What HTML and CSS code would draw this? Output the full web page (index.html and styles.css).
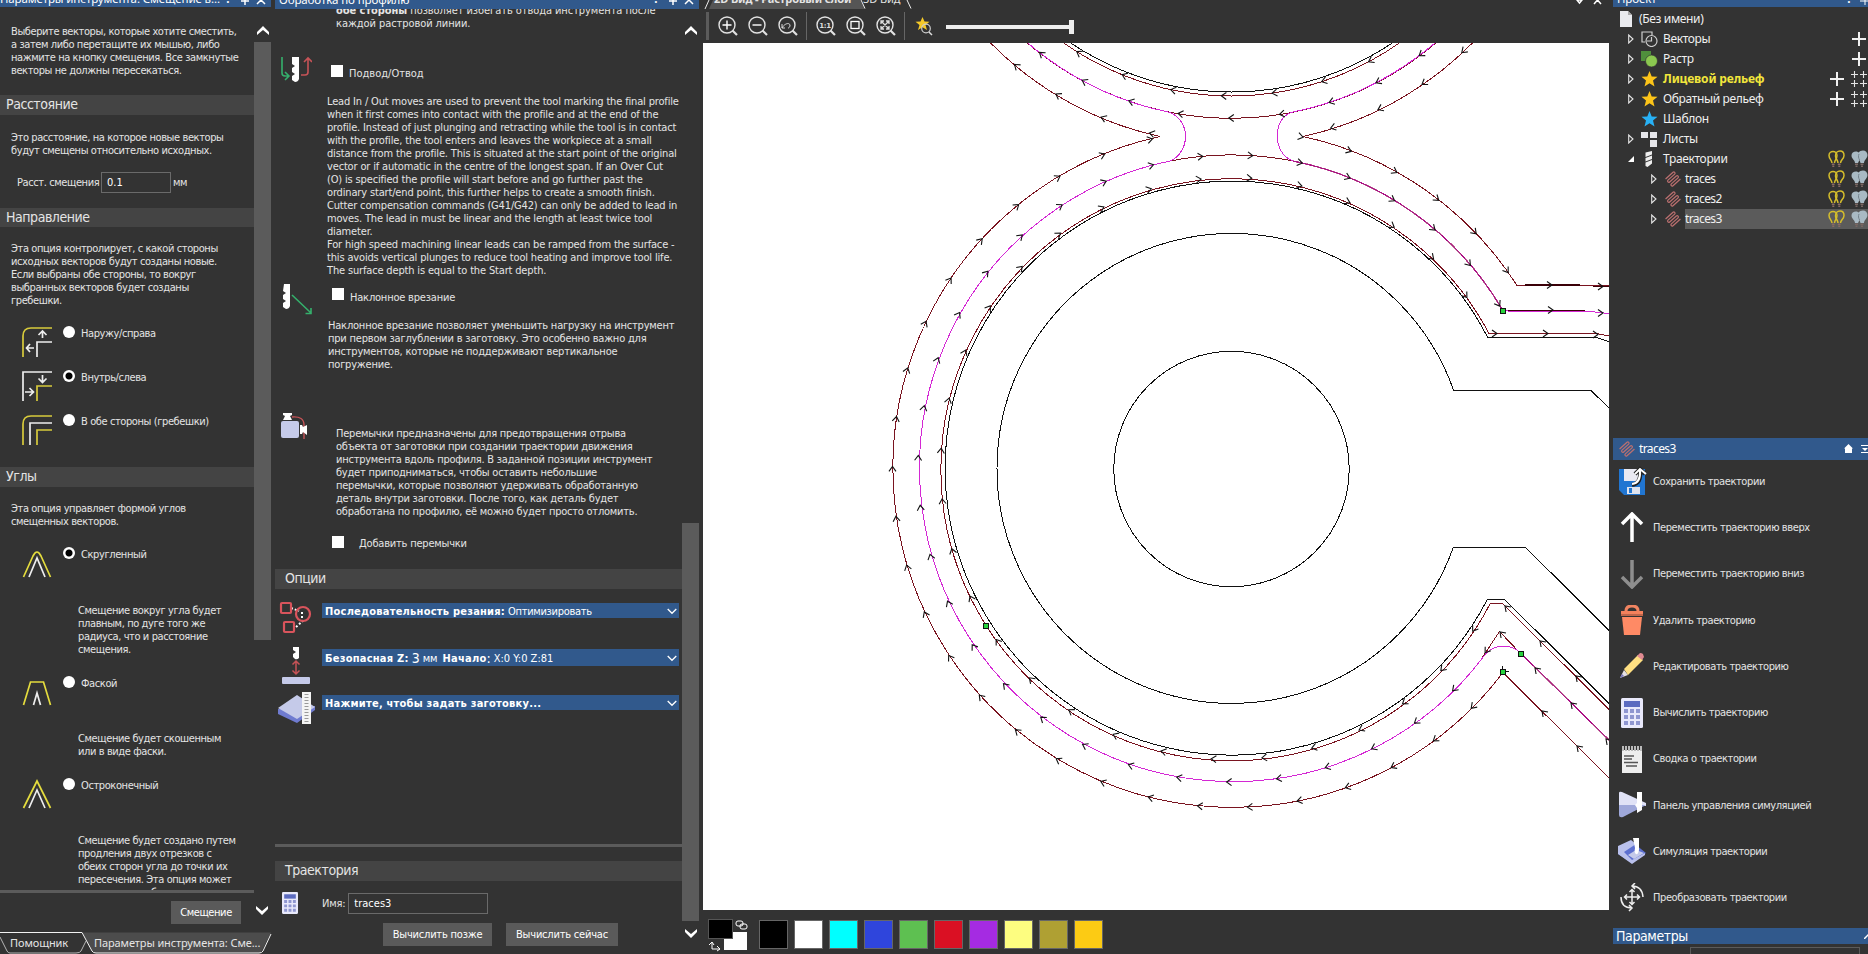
FILE: index.html
```html
<!DOCTYPE html>
<html lang="ru">
<head>
<meta charset="utf-8">
<title>traces3</title>
<link rel="stylesheet" href="styles.css">
</head>
<body>
<svg class="defs" width="0" height="0">
  <defs>
    <symbol id="i-path" viewBox="0 0 18 18"><path transform="translate(9 9) rotate(-42)" d="M-5.500-5H4.500q1.200 0 1.200 1.200T4.500-2.500h-9q-1.200 0-1.200 1.250T-4.500 0h9q1.200 0 1.200 1.250T4.500 2.500h-9q-1.200 0-1.200 1.250T-4.500 5h10" fill="none" stroke="#bb7070" stroke-width="1.250"/></symbol>
    <symbol id="i-plus" viewBox="0 0 14 14"><path d="M7 0v14M0 7h14" stroke="#f0f0f0" stroke-width="2"/></symbol>
    <symbol id="i-plus4" viewBox="0 0 16 16"><path d="M3.500 0v7M0 3.500h7M12.500 0v7M9 3.500h7M3.500 9v7M0 12.500h7M12.500 9v7M9 12.500h7" stroke="#e4e4e4" stroke-width="1.100"/></symbol>
    <symbol id="i-star" viewBox="0 0 16 16"><path d="M8 0l2.200 5.500 5.800.3-4.500 3.700 1.500 5.900L8 12.200l-5 3.200 1.500-5.900L0 5.800l5.800-.3z" fill="currentColor"/></symbol>
    <symbol id="i-bulbs" viewBox="0 0 17 18"><g fill="none" stroke="#d6be2c" stroke-width="1.500"><path d="M4 13c0-3-3-4-3-7.500C1 3 3 1.500 5 1.500S9 3 9 5.500c0 3.500-2.500 4.500-2.500 7.500"/><path d="M10 13c0-3-2.500-4-2.500-7C7.500 3 9.500 1 12 1s4 2 4 4.500c0 3.500-3.500 4.500-3.500 7.500"/></g><path d="M3.800 14.200h2.800M9.800 14.200h2.800M4.300 16.300h2M10.300 16.300h2" stroke="#8a6b62" stroke-width="1.600"/></symbol>
    <symbol id="i-bulbg" viewBox="0 0 17 18"><path d="M4 13c0-3-3.500-4-3.500-7.500C.5 3 2.500 1.500 5 1.500c1 0 2 .5 2.500 1C8.500 1.200 10 .5 12 .5c2.500 0 4.500 2 4.500 4.500 0 3.500-3.500 5-3.500 8H9.500L8.500 10 7 13z" fill="#a9bac4"/><path d="M8 4c-1 2-.5 4 .6 6" stroke="#75848d" fill="none"/><path d="M4 14.200h3M9.500 14.200h3M4.500 16.300h2M10 16.300h2" stroke="#7a6762" stroke-width="1.600"/></symbol>
    <symbol id="i-tri" viewBox="0 0 6 10"><path d="M.7 1v8L5 5z" fill="none" stroke="#e6e6e6" stroke-width="1.100"/></symbol>
    <symbol id="i-calc" viewBox="0 0 22 30"><rect width="22" height="30" rx="1.500" fill="#e9e9fb"/><path d="M3 3h16v6H3z" fill="#5c6bc0"/><path d="M3 11h4v4H3zM9 11h4v4H9zM15 11h4v4h-4zM3 17h4v4H3zM9 17h4v4H9zM15 17h4v4h-4zM3 23h4v4H3zM9 23h4v4H9zM15 23h4v4h-4z" fill="#8f96d0"/></symbol>
    <symbol id="i-up" viewBox="0 0 12 9"><path d="M0 9V6l6-6 6 6v3L6 4z" fill="#fff"/></symbol>
    <symbol id="i-down" viewBox="0 0 12 9"><path d="M0 0v3l6 6 6-6V0L6 5z" fill="#fff"/></symbol>
    <symbol id="i-chev" viewBox="0 0 10 7"><path d="M.7 1 5 5.300 9.300 1" fill="none" stroke="#fff" stroke-width="1.300"/></symbol>
    <symbol id="i-lens" viewBox="0 0 20 20"><circle cx="9" cy="9" r="8" fill="none" stroke="#e2e2e2" stroke-width="1.400"/><path d="M14.500 14.500 19 19" stroke="#e2e2e2" stroke-width="2.200"/></symbol>
    <symbol id="i-pinx" viewBox="0 0 34 8"><path d="M4 1h8M8 0v5M20 4l4-4 4 4" stroke="#fff" stroke-width="1.500" fill="none"/></symbol>
  </defs>
</svg>
<div class="app">
  <section class="left">
    <header class="title"><span class="ttext">Параметры инструмента: Смещение в...</span><span class="q">?</span><svg width="34" height="8"><use href="#i-pinx"/></svg></header>
    <div class="lwrap">
      <div class="lbody">
        <p class="t a1">Выберите векторы, которые хотите сместить,<br>а затем либо перетащите их мышью, либо<br>нажмите на кнопку смещения. Все замкнутые<br>векторы не должны пересекаться.</p>
        <h2 class="bar"><span>Расстояние</span></h2>
        <p class="t a2">Это расстояние, на которое новые векторы<br>будут смещены относительно исходных.</p>
        <div class="field"><span class="flabel">Расст. смещения</span><span class="inp">0.1</span><span class="unit">мм</span></div>
        <h2 class="bar b2"><span>Направление</span></h2>
        <p class="t a3">Эта опция контролирует, с какой стороны<br>исходных векторов будут созданы новые.<br>Если выбраны обе стороны, то вокруг<br>выбранных векторов будет созданы<br>гребешки.</p>
        <div class="opt"><svg width="30" height="30" fill="none" stroke-width="1.700"><path d="M1 30V9q0-8 8-8h21" stroke="#d8cb3c"/><path d="M15 30V15h15M12 21H4.500m3.500-4-3.500 4L8 25M20.500 11V4m-4 4 4-4 4 4" stroke="#eee"/></svg><i class="radio"></i><span>Наружу/справа</span></div>
        <div class="opt"><svg width="30" height="30" fill="none" stroke-width="1.700"><path d="M15 30V15h15" stroke="#d8cb3c"/><path d="M1 30V1h29M3 21h8.500m-4-4 4 4-4 4M20.500 4v7.500m-4-4 4 4 4-4" stroke="#eee"/></svg><i class="radio on"></i><span>Внутрь/слева</span></div>
        <div class="opt"><svg width="30" height="30" fill="none" stroke-width="1.700"><path d="M1 30V9q0-8 8-8h21M15 30V15h15" stroke="#d8cb3c"/><path d="M8 30V8h22" stroke="#eee"/></svg><i class="radio"></i><span>В обе стороны (гребешки)</span></div>
        <h2 class="bar b3"><span>Углы</span></h2>
        <p class="t a4">Эта опция управляет формой углов<br>смещенных векторов.</p>
        <div class="opt c1"><svg width="30" height="30" fill="none" stroke-width="1.700"><path d="M1.500 29 11 8q4-8 8 0l9.500 21" stroke="#e4dc3e"/><path d="M7 29 15 10l8 19" stroke="#eee"/></svg><i class="radio on"></i><span>Скругленный</span></div>
        <p class="t d1">Смещение вокруг угла будет<br>плавным, по дуге того же<br>радиуса, что и расстояние<br>смещения.</p>
        <div class="opt c2"><svg width="30" height="30" fill="none" stroke-width="1.700"><path d="M1.500 28 8.500 5h13l7 23" stroke="#e4dc3e"/><path d="M11.500 28 15 16l3.500 12" stroke="#eee"/></svg><i class="radio"></i><span>Фаской</span></div>
        <p class="t d2">Смещение будет скошенным<br>или в виде фаски.</p>
        <div class="opt c2"><svg width="30" height="30" fill="none" stroke-width="1.700"><path d="M1.500 29 15 2l13.500 27" stroke="#e4dc3e"/><path d="M7 29 15 11l8 18" stroke="#eee"/></svg><i class="radio"></i><span>Остроконечный</span></div>
        <p class="t d3">Смещение будет создано путем<br>продления двух отрезков с<br>обеих сторон угла до точки их<br>пересечения. Эта опция может<br>привести к особенно</p>
      </div>
      <div class="lscroll"><svg width="12" height="9"><use href="#i-up"/></svg><div class="thumb"></div></div>
    </div>
    <div class="lfoot"><span class="btn">Смещение</span><svg width="12" height="9"><use href="#i-down"/></svg></div>
    <div class="tabs"><svg width="272" height="22" fill="none"><path d="M82 0.500h189l-9 18q-1 2.500-3 2.500H96q-3 0-4-2z" fill="#4c4c4c"/><path d="M0 .5h82l10 18.500q1 2 4 2h163q3 0 4-2L271 2" stroke="#f2f2f2"/><path d="M0 5l7 14q1 2 3 2h66q4 0 5-2l5-10" stroke="#b5b5b5"/></svg><span class="tab1">Помощник</span><span class="tab2">Параметры инструмента: Сме...</span></div>
  </section>

  <section class="mid">
    <header class="title"><span class="ttext">Обработка по профилю</span><span class="q">?</span><svg width="34" height="8"><use href="#i-pinx"/></svg></header>
    <div class="mwrap">
      <div class="mbody">
        <p class="t m0"><b>обе стороны</b> позволяет избегать отвода инструмента после<br>каждой растровой линии.</p>
        <div class="chk k1"><svg width="32" height="26" fill="none" stroke-width="1.600"><path d="M2 1v16q0 3 3 3h4m-4-4 4 4-4 4" stroke="#35b06c"/><path d="M12 1h7v22q-1 3-4 3l-3-2v-4l3-2-3-2v-4l3-2-3-2z" fill="#fff"/><path d="M21 19h4q3 0 3-3V2m-4 4 4-4 4 4" stroke="#c65357"/></svg><i class="box"></i><span>Подвод/Отвод</span></div>
        <p class="t m1">Lead In / Out moves are used to prevent the tool marking the final profile<br>when it first comes into contact with the profile and at the end of the<br>profile. Instead of just plunging and retracting while the tool is in contact<br>with the profile, the tool enters and leaves the workpiece at a small<br>distance from the profile. This is situated at the start point of the original<br>vector or if automatic in the centre of the longest span. If an Over Cut<br>(O) is specified the profile will start before and go further past the<br>ordinary start/end point, this further helps to create a smooth finish.<br>Cutter compensation commands (G41/G42) can only be added to lead in<br>moves. The lead in must be linear and the length at least twice tool<br>diameter.<br>For high speed machining linear leads can be ramped from the surface -<br>this avoids vertical plunges to reduce tool heating and improve tool life.<br>The surface depth is equal to the Start depth.</p>
        <div class="chk k2"><svg width="32" height="32" fill="none" stroke-width="1.600"><path d="M2 1h6v22q-1 3-4 3l-3-2v-4l3-2-3-2v-4l3-2-3-2z" fill="#fff"/><path d="M10 12l19 18m0-5v5.500h-5.500" stroke="#35b06c"/></svg><i class="box"></i><span>Наклонное врезание</span></div>
        <p class="t m2">Наклонное врезание позволяет уменьшить нагрузку на инструмент<br>при первом заглублении в заготовку. Это особенно важно для<br>инструментов, которые не поддерживают вертикальное<br>погружение.</p>
        <div class="bridge"><svg width="30" height="30"><path d="M12 5q12-1 12 8v14" stroke="#c65357" fill="none" stroke-width="1.400"/><rect x="1" y="9" width="18" height="17" rx="2" fill="#c5cae9"/><path d="M3 1h9v2l-2 1 2 4H3l2-4-2-1zM20 13h2l1 2 4-2v10l-4-3-1 2h-2z" fill="#fff"/></svg>
        <p class="t m3">Перемычки предназначены для предотвращения отрыва<br>объекта от заготовки при создании траектории движения<br>инструмента вдоль профиля. В заданной позиции инструмент<br>будет приподниматься, чтобы оставить небольшие<br>перемычки, которые позволяют удерживать обработанную<br>деталь внутри заготовки. После того, как деталь будет<br>обработана по профилю, её можно будет просто отломить.</p></div>
        <div class="chk k3"><i class="box"></i><span>Добавить перемычки</span></div>
        <h2 class="bar"><span>Опции</span></h2>
        <div class="combos">
          <div class="crow"><svg width="36" height="34" fill="none"><path d="M13 7l8 3M18 26l8-7M24 11v6" stroke="#fff" stroke-width="2" stroke-dasharray="2 2"/><rect x="3" y="2" width="10" height="10" rx="1" stroke="#d9545c" stroke-width="2.200"/><rect x="6" y="21" width="10" height="10" rx="1" stroke="#d9545c" stroke-width="2.200"/><circle cx="25" cy="13" r="7" stroke="#d9545c" stroke-width="2.200"/></svg><div class="combo"><b>Последовательность резания:</b><span>Оптимизировать</span><svg width="10" height="7"><use href="#i-chev"/></svg></div></div>
          <div class="crow r2"><svg width="36" height="38" fill="none"><path d="M15 1h6v11q-2 2-4 1l-2-2V8l3-2-3-2z" fill="#fff"/><path d="M18 15v13m-3.500-9.500L18 15l3.500 3.500m-7 6L18 28l3.500-3.500" stroke="#c65357" stroke-width="1.500"/><rect x="4" y="31" width="28" height="7" rx="1" fill="#c5cae9"/></svg><div class="combo"><b>Безопасная Z:</b><span class="big">3</span><span class="mm">мм</span><b class="st">Начало</b><span class="big">:</span><span>X:0 Y:0 Z:81</span><svg width="10" height="7"><use href="#i-chev"/></svg></div></div>
          <div class="crow r3"><svg width="38" height="34"><path d="M0 18v5l19 9 18-13v-4z" fill="#6f7bd0"/><path d="M0 17 19 4l18 12-18 12z" fill="#c5cae9"/><path d="M24 1h9v32h-9z" fill="#f4f4f4"/><path d="M28.500 3v29" stroke="#999" stroke-width="4" stroke-dasharray="1 2"/></svg><div class="combo"><b>Нажмите, чтобы задать заготовку...</b><svg width="10" height="7"><use href="#i-chev"/></svg></div></div>
        </div>
        <div class="rule"></div>
        <h2 class="bar"><span>Траектория</span></h2>
        <div class="name"><svg width="16" height="22"><use href="#i-calc"/></svg><span>Имя:</span><span class="inp">traces3</span></div>
        <div class="btns"><span class="btn">Вычислить позже</span><span class="btn">Вычислить сейчас</span></div>
      </div>
      <div class="mscroll"><svg width="12" height="9"><use href="#i-up"/></svg><div class="thumb"></div><svg width="12" height="9"><use href="#i-down"/></svg></div>
    </div>
  </section>

  <main class="view">
    <div class="vtabs"><svg width="225" height="9"><path d="M6 9 10 0h147l5 9z" fill="#555"/><path d="M2 9 6 0M158 0l4 8.500M204 0l4 8.500" stroke="#eee" fill="none"/></svg><span class="vt1">2D Вид - Растровый слой</span><span class="vt2">3D Вид</span><svg class="vx" width="30" height="5"><path d="M2 0h5L4.500 3zM19 4l3.500-4L26 4" fill="none" stroke="#fff" stroke-width="1.500"/></svg></div>
    <div class="tools">
      <i class="grip"></i>
      <span class="zi"><svg width="20" height="20"><use href="#i-lens"/><path d="M9 4.500v9M4.500 9h9" stroke="#fff" stroke-width="1.400"/></svg></span>
      <span class="zi"><svg width="20" height="20"><use href="#i-lens"/><path d="M4.500 9h9" stroke="#fff" stroke-width="1.400"/></svg></span>
      <span class="zi"><svg width="20" height="20" fill="none"><use href="#i-lens"/><path d="M4 12V8m0 4h3M4 12c2-4 7-6 8-3 0 2-1 3-2 3" stroke="#ddd"/></svg></span>
      <i class="sep"></i>
      <span class="zi"><svg width="20" height="20"><use href="#i-lens"/><text x="9" y="11.800" class="one">1:1</text></svg></span>
      <span class="zi"><svg width="20" height="20"><use href="#i-lens"/><rect x="5" y="5.500" width="8" height="7" fill="none" stroke="#fff" stroke-width="1.300"/></svg></span>
      <span class="zi"><svg width="20" height="20"><use href="#i-lens"/><path d="M5 5l8 8M13 5l-8 8M5 8V5h3M10 5h3v3M13 10v3h-3M8 13H5v-3" fill="none" stroke="#ddd" stroke-width="1.300"/></svg></span>
      <i class="sep"></i>
      <svg class="sz" width="18" height="19" fill="none"><path d="M7.500 0l2 4.500 5 .3-4 3.200 1.500 5-4.500-2.800L3 13l1.500-5-4-3.200 5-.3z" fill="#f5c928"/><circle cx="11" cy="11.500" r="4.300" stroke="#ccc" stroke-width="1.200"/><path d="M14 15l3 3" stroke="#ddd" stroke-width="1.500"/></svg>
      <div class="slider"><i></i></div>
    </div>
    <svg class="canvas" viewBox="703 43 906 867" width="906" height="867" fill="none">
      <g class="ink">
        <circle cx="1231.500" cy="469" r="117.700"/>
        <path d="M1609 408 1591 390.500H1453.700A235 235 0 1 0 1453.300 547.500H1525.700L1609 630.500"/>
        <path d="M1609 341.500 1596 337.500H1487.700A287 287 0 1 0 1487.300 599.500H1504.700L1609 703.500"/>
        <circle cx="1231.500" cy="-196" r="288"/>
      </g>
      <g class="cut">
        <path d="M1609 336 1596 333.500H1489A291 291 0 1 0 1490.300 603.500H1502.500L1609 709.500"/>
        <circle cx="1231.500" cy="-196" r="292"/>
        <circle cx="1231.500" cy="-196" r="314.300"/>
        <path d="M1170 161A313.500 313.500 0 0 1 1293 161M1482 658 1499.500 631.500 1521 654"/>
        <path d="M1609 778 1503 672.500A339.300 339.300 0 1 1 1160 136.500A339.300 339.300 0 0 1 975 26M1488 26A339.300 339.300 0 0 1 1303 136.500A339.300 339.300 0 0 1 1517 285.500H1609"/>
      </g>
      <path d="M1525 285h55M1593 286.500h16M1505 310.500h80" stroke="#3a0008" stroke-width="1.200"/>
      <g class="sel">
        <path d="M957 -44A314.300 314.300 0 0 0 1168 112C1191 119 1191 152 1170 161A313.500 313.500 0 1 0 1484 656C1492 644 1511 643 1521 653.500L1609 740"/>
        <path d="M1506 -44A314.300 314.300 0 0 1 1293 112C1272 117 1272 154 1293 161A313.500 313.500 0 0 1 1502 309Q1505 311.500 1515 311.500H1590L1609 313.500"/>
      </g>
      <path d="M1293 161A313.500 313.500 0 0 1 1502 309M1521 653.500 1609 740" stroke="#8a0046" stroke-width="1.500" opacity=".55"/>
      <g id="arrows" class="arrows"></g>
      <g fill="#28d23c" stroke="#111"><path d="M1500.500 308.500h5v5h-5zM983.500 623.500h5v5h-5zM1518.500 651.500h5v5h-5zM1500.500 669.500h5v5h-5z"/></g>
      <path d="M1502.500 666v3M1506 671.500h3" stroke="#111"/>
    </svg>
    <div class="palette">
      <svg class="fgbg" width="42" height="34"><rect x="16" y="13" width="23" height="18" fill="#fff"/><rect x=".5" y=".5" width="24" height="19" fill="#000" stroke="#555"/><g fill="none" stroke="#fff"><rect x="28" y="2" width="7" height="5" rx="2"/><rect x="32" y="5" width="7" height="5" rx="2"/><path d="M1 26l3-3 2 3M4 23v7h8m-3-3 3 3-3 2"/></g></svg>
      <i class="sw k"></i><i class="sw wh"></i><i class="sw cy"></i><i class="sw bl"></i><i class="sw gr"></i><i class="sw rd"></i><i class="sw pu"></i><i class="sw ly"></i><i class="sw ol"></i><i class="sw ye"></i>
    </div>
  </main>

  <section class="right">
    <header class="title"><span class="ttext">Проект</span><span class="q">?</span><svg width="10" height="8"><path d="M2 1h8M7 0v5" stroke="#fff"/></svg></header>
    <div class="tree">
      <div class="row root"><svg width="12" height="16"><path d="M0 0h8l4 4v12H0z" fill="#e9eaee"/><path d="M8 0v4h4z" fill="#aaa"/></svg><span>(Без имени)</span></div>
      <div class="row"><svg class="tr" width="6" height="10"><use href="#i-tri"/></svg><svg class="ic" width="17" height="16" fill="none" stroke="#cfcfcf" stroke-width="1.200"><path d="M4 11H1V1h10v3"/><circle cx="10.500" cy="10" r="5.500"/><path d="M10.500 6v4H6"/></svg><span>Векторы</span><svg class="p2" width="14" height="14"><use href="#i-plus"/></svg></div>
      <div class="row"><svg class="tr" width="6" height="10"><use href="#i-tri"/></svg><svg class="ic" width="17" height="16"><path d="M0 0h10v10H0z" fill="#4f8f3c"/><circle cx="10.500" cy="10" r="6" fill="#8bc850" stroke="#333" stroke-width=".7"/></svg><span>Растр</span><svg class="p2" width="14" height="14"><use href="#i-plus"/></svg></div>
      <div class="row"><svg class="tr" width="6" height="10"><use href="#i-tri"/></svg><svg class="ic gold" width="17" height="16"><use href="#i-star"/></svg><b>Лицевой рельеф</b><svg class="p1" width="14" height="14"><use href="#i-plus"/></svg><svg class="p3" width="16" height="16"><use href="#i-plus4"/></svg></div>
      <div class="row"><svg class="tr" width="6" height="10"><use href="#i-tri"/></svg><svg class="ic gold" width="17" height="16"><use href="#i-star"/></svg><span>Обратный рельеф</span><svg class="p1" width="14" height="14"><use href="#i-plus"/></svg><svg class="p3" width="16" height="16"><use href="#i-plus4"/></svg></div>
      <div class="row"><svg class="tr" width="6" height="10"></svg><svg class="ic blue" width="17" height="16"><use href="#i-star"/></svg><span>Шаблон</span></div>
      <div class="row"><svg class="tr" width="6" height="10"><use href="#i-tri"/></svg><svg class="ic" width="17" height="16"><path d="M0 1h7v6H0zM9 1h7v6H9zM9 9h7v7H9z" fill="#e6e6ea"/></svg><span>Листы</span></div>
      <div class="row"><svg class="tr" width="6" height="10"><path d="M6 2v6H0z" fill="#fff"/></svg><svg class="ic" width="17" height="16"><path d="M4.500 1.500 11 0v3.500L4.500 6zM4.500 7 11 4.500V8l-6.500 2.500zM4.500 11.500 11 9v3.500L6.500 16l-2-1z" fill="#eee"/></svg><span>Траектории</span><svg class="p1 bu" width="17" height="18"><use href="#i-bulbs"/></svg><svg class="p3" width="17" height="18"><use href="#i-bulbg"/></svg></div>
      <div class="row sub"><svg class="tr" width="6" height="10"><use href="#i-tri"/></svg><svg class="ic" width="18" height="18"><use href="#i-path"/></svg><div class="nm"><span>traces</span><svg class="p1 bu" width="17" height="18"><use href="#i-bulbs"/></svg><svg class="p3" width="17" height="18"><use href="#i-bulbg"/></svg></div></div>
      <div class="row sub"><svg class="tr" width="6" height="10"><use href="#i-tri"/></svg><svg class="ic" width="18" height="18"><use href="#i-path"/></svg><div class="nm"><span>traces2</span><svg class="p1 bu" width="17" height="18"><use href="#i-bulbs"/></svg><svg class="p3" width="17" height="18"><use href="#i-bulbg"/></svg></div></div>
      <div class="row sub"><svg class="tr" width="6" height="10"><use href="#i-tri"/></svg><svg class="ic" width="18" height="18"><use href="#i-path"/></svg><div class="nm hot"><span>traces3</span><svg class="p1 bu" width="17" height="18"><use href="#i-bulbs"/></svg><svg class="p3" width="17" height="18"><use href="#i-bulbg"/></svg></div></div>
    </div>
    <div class="phead"><svg width="18" height="18"><use href="#i-path"/></svg><span>traces3</span><svg width="24" height="10"><path d="M4.500 0 9 4.500H8V9H1V4.500H0zM17 1h7v1h-7zM18 4h6l-3 3zM17 8h7v1h-7z" fill="#fff"/></svg></div>
    <div class="cmds">
      <div class="cmd"><svg width="30" height="30"><path d="M1 3h26v26H6l-5-5z" fill="#2176d2"/><path d="M6 3h16v12H6z" fill="#e9e9f2"/><path d="M9 21h13v7H9z" fill="#dfe3ee"/><path d="M11 22h3v5h-3z" fill="#2176d2"/><path d="M14 19q10-2 8-15m-5 4 5-5 5 5" stroke="#222" stroke-width="4" fill="none"/><path d="M14 18q9-1 8-14m-5 4 5-5 6 5" stroke="#fff" stroke-width="2" fill="none"/></svg><span>Сохранить траектории</span></div>
      <div class="cmd"><svg width="30" height="30" fill="none"><path d="M14 30V3M4 12 14 2l10 10" stroke="#fff" stroke-width="3.500"/></svg><span>Переместить траекторию вверх</span></div>
      <div class="cmd"><svg width="30" height="30" fill="none"><path d="M14 1v26M4 18l10 10 10-10" stroke="#8e8e8e" stroke-width="3.500"/></svg><span>Переместить траекторию вниз</span></div>
      <div class="cmd"><svg width="30" height="30"><path d="M8 8V6q0-5 6-5t6 5v2" stroke="#f08461" stroke-width="3" fill="none"/><path d="M3 6h22v5H3z" fill="#f4815c"/><path d="M3 10h22" stroke="#8b4a38"/><path d="M4 12h20l-2 18H6z" fill="#ff8a65"/></svg><span>Удалить траекторию</span></div>
      <div class="cmd"><svg width="30" height="30"><path d="M2 27l4-8 4 5z" fill="#e7e2e4"/><path d="M2 27l2-4 2 2z" fill="#7774c0"/><path d="M6 18 20 4l5 5-15 15z" fill="#ffe082"/><path d="M19 5l3-3q2 0 3 1l1 3-2 3z" fill="#e08a92"/></svg><span>Редактировать траекторию</span></div>
      <div class="cmd"><svg width="30" height="30"><g transform="translate(3 0)"><use href="#i-calc" width="22" height="30"/></g></svg><span>Вычислить траекторию</span></div>
      <div class="cmd"><svg width="30" height="30"><path d="M4 6h20v23H4z" fill="#eee"/><path d="M4 4.500h20" stroke="#bbb" stroke-width="5" stroke-dasharray="2 1"/><path d="M6 12h10M6 15h8M6 18.500h14M8 22h11" stroke="#555" stroke-width="1.300"/></svg><span>Сводка о траектории</span></div>
      <div class="cmd"><svg width="30" height="30"><path d="M1 3q0-2 3-1l24 11v3L1 16z" fill="#e0e2f6"/><path d="M1 15h27L5 27q-4 1-4-2z" fill="#9fa8da"/><path d="M19 2h5v18l-5 3v-5l-2-3 2-2z" fill="#fff"/></svg><span>Панель управления симуляцией</span></div>
      <div class="cmd"><svg width="30" height="30"><path d="M0 10 12 4l6 4 10 8-14 10L0 17z" fill="#5c6fd0"/><path d="M0 9 13 3l5 4-12 8 8 8L27 16v2L14 27 0 17z" fill="#b9c0ec"/><path d="M10 18l8-5 8 3-10 6z" fill="#c5cae9"/><path d="M15 1h6v12q-1 5-3 4t-1-6z" fill="#fff"/></svg><span>Симуляция траектории</span></div>
      <div class="cmd"><svg width="30" height="30" fill="none" stroke="#eee" stroke-width="1.500"><path d="M14 7v14M7 14h14M11.500 9 14 6.500 16.500 9M11.500 19l2.500 2.500 2.500-2.500M9 11.500 6.500 14 9 16.500M19 11.500l2.500 2.500-2.500 2.500M14 3q10 0 11 11M17 0l-3 3 3 3M3 14q0 11 11 11m-3-3 3 3-3 3"/></svg><span>Преобразовать траектории</span></div>
    </div>
    <div class="params"><span>Параметры</span><svg width="4" height="6"><path d="M0 6l5-5" stroke="#fff" stroke-width="1.500"/></svg></div>
    <div class="pbox"></div>
  </section>
</div>
<script src="arrows.js"></script>
</body>
</html>
```

FILE: styles.css
```css
* { box-sizing: border-box; }
body { margin: 0; background: #333; color: #e4e4e4; font: 11px/13px "DejaVu Sans Condensed", "DejaVu Sans", sans-serif; font-stretch: condensed; letter-spacing: -.4px; overflow: hidden; }
h2, p { margin: 0; font-weight: normal; }
svg { display: block; flex: none; }
i { display: block; flex: none; }
.defs { position: absolute; }
.app { display: flex; width: 1868px; height: 954px; overflow: hidden; white-space: nowrap; }
.title { display: flex; height: 7px; background: #31598c; overflow: hidden; color: #fff; flex: none; font: 11.500px/16px "Noto Sans", sans-serif; letter-spacing: -.1px; }
.ttext { margin-top: -9px; flex: 1; }
.q { margin: -9px 6px 0 0; font-weight: bold; }
.bar { display: flex; align-items: center; height: 20px; background: #444; padding: 0 0 1px 6px; font-size: 14px; letter-spacing: -.45px; flex: none; }
.inp { display: flex; align-items: center; border: 1px solid #6a6a6a; height: 21px; padding-left: 5px; color: #fff; width: 70px; letter-spacing: 0; }
.btn { display: flex; align-items: center; justify-content: center; background: #5a5a5a; height: 23px; color: #fff; }
.thumb { background: #5b5b5b; width: 17px; }

.left { width: 271px; display: flex; flex-direction: column; margin-right: 4px; flex: none; }
.lwrap { display: flex; height: 883px; flex: none; }
.lbody { width: 254px; height: 886px; overflow: hidden; border-bottom: 3px solid #5b5b5b; flex: none; }
.a1 { padding: 18px 0 18px 11px; }
.a2 { padding: 16px 0 15px 11px; }
.field { display: flex; align-items: center; height: 21px; padding-left: 17px; margin-bottom: 15px; }
.flabel { width: 84px; }
.unit { margin-left: 2px; }
.b2 { height: 19px; }
.a3 { padding: 15px 0 20px 11px; }
.opt { display: flex; height: 44px; padding-left: 22px; align-items: flex-start; }
.radio { width: 12px; height: 12px; border-radius: 50%; background: #fff; margin: -1px 6px 0 12px; }
.opt svg { margin-right: -1px; }
.radio.on { background: radial-gradient(circle, #000 3px, #fff 4px); }
.b3 { margin-top: 8px; }
.a4 { padding: 15px 0 20px 11px; }
.c1 { height: 56px; }
.d1, .d2, .d3 { padding-left: 78px; }
.c2 { height: 55px; margin-top: 21px; }
.lscroll { display: flex; flex-direction: column; align-items: center; width: 17px; padding-top: 19px; flex: none; }
.lscroll .thumb { height: 598px; margin-top: 7px; flex: none; }
.lfoot { display: flex; height: 42px; padding: 11px 3px 0 171px; justify-content: space-between; flex: none; }
.lfoot .btn { width: 70px; }
.lfoot svg { margin: 5px 0 0; }
.tabs { position: relative; height: 22px; font: 11px/16px "Noto Sans", sans-serif; letter-spacing: -.1px; }
.tab1, .tab2 { position: absolute; top: 3px; left: 10px; }
.tab2 { left: 94px; }

.mid { width: 424px; display: flex; flex-direction: column; margin-right: 4px; flex: none; letter-spacing: -.2px; }
.mid .title { height: 9px; }
.mid .ttext { padding-left: 4px; margin-top: -8px; }
.mwrap { display: flex; height: 945px; overflow: hidden; }
.mbody { width: 407px; display: flex; flex-direction: column; flex: none; }
.mbody > * { flex: none; }
.m0 { padding-left: 61px; margin-top: -5px; height: 52px; letter-spacing: -.07px; }
.chk { display: flex; padding-left: 5px; }
.k1 { height: 39px; letter-spacing: 0; }
.box { width: 12px; height: 12px; background: #fff; margin: 9px 6px 0 19px; }
.k1 > span { margin-top: 11px; }
.m1 { padding-left: 52px; height: 188px; letter-spacing: -.16px; }
.k2 { height: 36px; padding-left: 7px; }
.k2 .box { margin-top: 5px; margin-left: 18px; }
.k2 > span { margin-top: 8px; }
.m2 { padding-left: 53px; height: 93px; }
.bridge { display: flex; padding-left: 5px; height: 122px; }
.m3 { padding: 15px 0 0 26px; letter-spacing: -.23px; }
.k3 { height: 35px; padding-left: 57px; }
.k3 .box { margin: 2px 15px 0 0; }
.k3 > span { margin-top: 3px; }
.mid .bar { padding-left: 10px; }
.combos { padding: 12px 3px 0 3px; height: 255px; }
.crow { display: flex; height: 45px; }
.combo { display: flex; flex: 1; align-items: center; height: 15px; background: #31598c; padding: 1px 2px 0 3px; margin: 2px 0 0 8px; color: #fff; letter-spacing: -.3px; }
.combo svg { margin-left: auto; }
.combo b { margin-right: 3px; letter-spacing: .23px; }
.combo .big { font-size: 14px; margin-right: 3px; }
.combo .st { margin: 0 0 0 5px; }
.combo .mm { letter-spacing: 0; }
.r2 .combo { height: 17px; margin-top: 3px; letter-spacing: 0; }
.r3 .combo { margin-left: 6px; margin-top: 4px; }
.rule { height: 3px; background: #5b5b5b; margin-bottom: 14px; }
.name { display: flex; align-items: center; padding: 11px 0 0 7px; gap: 24px; }
.name .inp { width: 140px; margin-left: -21px; }
.btns { display: flex; padding: 9px 0 0 108px; gap: 14px; }
.btns .btn { width: 109px; }
.btns .btn + .btn { width: 112px; }
.mscroll { display: flex; flex-direction: column; align-items: center; width: 17px; padding-top: 17px; flex: none; }
.mscroll .thumb { height: 398px; margin: 488px 0 8px; flex: none; }

.view { width: 906px; display: flex; flex-direction: column; margin-right: 4px; flex: none; }
.vtabs { position: relative; height: 9px; overflow: hidden; font: 11px/16px "Noto Sans", sans-serif; letter-spacing: -.1px; }
.vt1, .vt2 { position: absolute; top: -9px; left: 11px; font-weight: bold; }
.vt2 { left: 160px; font-weight: normal; }
.vx { position: absolute; left: 872px; top: 0; }
.tools { display: flex; height: 34px; align-items: flex-start; padding: 7px 0 0 3px; }
.grip { width: 3px; height: 28px; background: #5b5b5b; margin: -4px 9px 0 0; }
.zi { width: 30px; }
.sep { width: 1px; height: 28px; background: #666; margin: -4px 9px 0 -2px; }
.one { font: bold 7px "DejaVu Sans", sans-serif; fill: #ddd; text-anchor: middle; }
.sz { margin: 1px 0 0 1px; }
.slider { width: 128px; height: 4px; background: #eee; margin: 9px 0 0 13px; }
.slider i { width: 5px; height: 14px; background: #eee; margin: -5px 0 0 auto; }
.canvas { background: #fff; shape-rendering: crispEdges; }
.ink { stroke: #111; }
.cut { stroke: #7a1420; }
.sel { stroke: #d428d4; }
.arrows { stroke: #111; stroke-width: 1.1; shape-rendering: auto; }
.palette { display: flex; height: 44px; padding: 10px 0 0 5px; gap: 6px; }
.fgbg { margin: -1px 3px 0 0; }
.sw { width: 29px; height: 29px; border: 1px solid #666; }
.k { background: #000; } .wh { background: #fff; } .cy { background: #00ffff; } .bl { background: #2f45dc; } .gr { background: #5ec051; }
.rd { background: #da1023; } .pu { background: #a52be2; } .ly { background: #fdfd80; } .ol { background: #afa033; } .ye { background: #fccb14; }

.right { width: 255px; display: flex; flex-direction: column; flex: none; }
.right .ttext { padding-left: 4px; }
.tree { height: 431px; padding-top: 2px; font: 12px/20px "Noto Sans", sans-serif; letter-spacing: -.35px; flex: none; }
.row { position: relative; display: flex; align-items: center; height: 20px; padding-left: 15px; color: #f0f0f0; }
.root { padding-left: 7px; gap: 7px; }
.tr { margin-right: 7px; }
.ic { margin-right: 5px; }
.row b { color: #f2e63c; letter-spacing: -.15px; }
.gold { color: #fcc419; } .blue { color: #28b1f5; }
.sub { padding-left: 38px; }
.sub .ic { margin-right: 3px; }
.nm { display: flex; align-items: center; flex: 1; height: 20px; letter-spacing: -.6px; }
.hot { background: #5b5b5b; }
.p1, .p2, .p3 { position: absolute; left: 217px; }
.bu { left: 215px; }
.p2 { left: 239px; }
.p3 { left: 238px; }
.phead { display: flex; align-items: center; height: 22px; background: #31598c; padding-left: 5px; font: 12px/20px "Noto Sans", sans-serif; letter-spacing: -.6px; color: #fff; flex: none; }
.phead span { margin-left: 3px; flex: 1; }
.cmds { height: 470px; margin-top: -2px; display: flex; flex-direction: column; flex: none; }
.cmd { display: flex; align-items: center; height: 46.300px; padding-left: 5px; flex: none; }
.cmd > span { margin-left: 5px; }
.params { display: flex; align-items: center; justify-content: space-between; height: 16px; background: #31598c; padding-left: 3px; color: #fff; font-size: 14px; letter-spacing: -.4px; flex: none; }
.pbox { border: 1px solid #5b5b5b; height: 20px; width: 170px; margin: 3px 0 0 77px; flex: none; }
```

FILE: arrows.js
```js
// Direction markers along the toolpaths.
(function () {
  var out = [];
  function arrow(x, y, deg) {
    out.push('<path transform="translate(' + x.toFixed(1) + ' ' + y.toFixed(1) + ') rotate(' + deg.toFixed(1) + ')" d="M-5-3.500 0 0-5 3.500"/>');
  }
  // Angles are clockwise from the top of each circle.
  function ring(cy, r, from, to, step) {
    for (var a = from; a <= to + 0.01; a += step) {
      var t = a * Math.PI / 180;
      arrow(1231.5 + r * Math.sin(t), cy - r * Math.cos(t), a);
    }
  }
  ring(468.5, 339, 12.2, 55, 8.5);
  ring(468.5, 339, 135, 348, 8.46);
  ring(468.5, 313.5, 126, 420, 9.15);
  ring(468.5, 291, 124, 420, 10);
  ring(-196, 339, 120, 165, 8.6);
  ring(-196, 339, 194, 240, 8.6);
  ring(-196, 314, 134, 240, 9.3);
  ring(-196, 292, 142, 240, 10);
  [[1552, 285], [1603, 286.500], [1553, 310], [1603, 313], [1497, 333.500], [1548, 333.500], [1598, 334.500]].forEach(function (p) { arrow(p[0], p[1], 0); });
  [[1505, 606], [1540, 641], [1576, 676], [1500, 632], [1535, 668], [1571, 703], [1606, 739], [1542, 711], [1577, 746]].forEach(function (p) { arrow(p[0], p[1], 225); });
  document.getElementById('arrows').innerHTML = out.join('');
})();
```
